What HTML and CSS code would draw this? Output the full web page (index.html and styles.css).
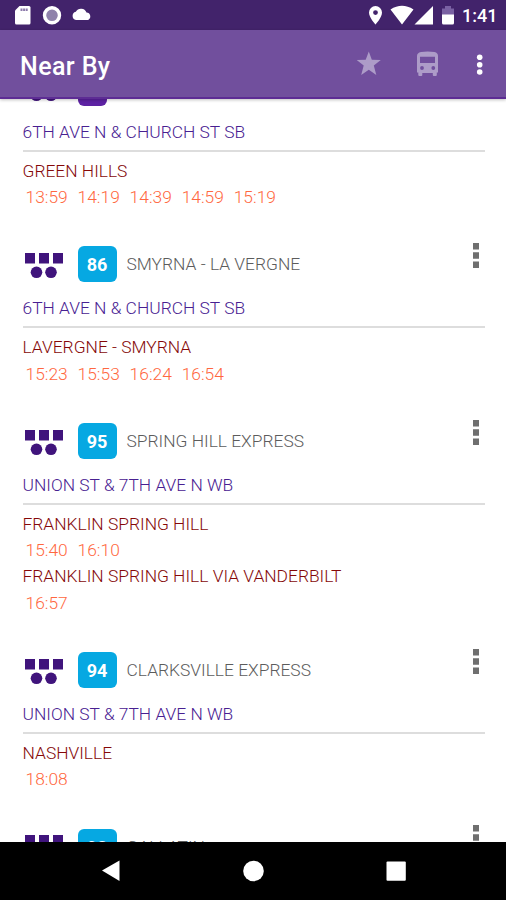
FILE: index.html
```html
<!DOCTYPE html>
<html lang="en">
<head>
<meta charset="utf-8">
<title>Near By</title>
<link rel="stylesheet" href="styles.css">
</head>
<body>
<svg width="0" height="0" class="defs">
  <symbol id="transit" viewBox="0 0 38 26">
    <path d="M0 0h10v10.500H0zM14 0h10v10.500H14zM28 0h10v10.500H28z"/>
    <circle cx="11.500" cy="19.300" r="5.800"/><circle cx="26" cy="19.300" r="5.800"/>
  </symbol>
  <symbol id="more" viewBox="0 0 6 26"><path d="M0 0h6v6.500H0zM0 9.200h6v6.500H0zM0 18.500h6v6.500H0z"/></symbol>
</svg>
<div class="screen">
  <div class="status">
    <svg class="status-left" viewBox="0 0 100 30">
      <path fill="#fff" d="M19.500 6H29q1.500 0 1.500 1.500V23q0 1.500-1.500 1.500H16.500Q15 24.500 15 23V10.500z"/>
      <path stroke="#8d7aab" stroke-width="2.500" stroke-dasharray="2 .6" d="M20.500 9.800H28"/>
      <circle cx="52" cy="15.300" r="7.500" fill="#8f82ab" stroke="#fff" stroke-width="3.400"/>
      <path fill="#fff" d="M76 20a4.200 4.200 0 0 1-.2-8.200A6 6 0 0 1 86.500 12.500a4 4 0 0 1 1.700 7.500z"/>
    </svg>
    <svg class="status-right" viewBox="363 0 98 30">
      <path fill="#fff" fill-rule="evenodd" d="M375.500 6a6.500 6.500 0 0 0-6.500 6.500c0 5 6.500 12 6.500 12s6.500-7 6.500-12A6.500 6.500 0 0 0 375.500 6zm0 4.200a2.400 2.400 0 1 1 0 4.800 2.400 2.400 0 0 1 0-4.800z"/>
      <path fill="#fff" d="M390.500 9.500q11.500-7.500 23 0L402 24.500zM433 6v18.500H414.500z"/>
      <path fill="#7a61a3" d="M442 8.500h3V6h6v2.500h3V15h-12z"/>
      <path fill="#fff" d="M442 14.500h12V23q0 1.500-1.500 1.500h-9Q442 24.500 442 23z"/>
    </svg>
    <span class="clock">1:41</span>
  </div>
  <header class="bar">
    <h1 class="title">Near By</h1>
    <svg class="bar-icons" viewBox="350 44 142 40">
      <path fill="#ad9cc8" d="M368.800 51.500l3 8.300 9 .3-7 5.500 2.500 9.400-7.500-5.200-7.600 5.200 2.500-9.400-7-5.500 9-.3z"/>
      <path fill="#ad9cc8" fill-rule="evenodd" d="M421 52q6.500-1.200 13.500 0 3.500.8 3.500 4v16.500h-1.200V75q0 1-1 1h-2q-1 0-1-1v-2h-10.500v2q0 1-1 1h-2q-1 0-1-1v-2.500H417V56q0-3.200 4-4zm-1 4.800v6.200h15v-6.200zm2 9.300a1.900 1.900 0 1 0 0 3.800 1.900 1.900 0 0 0 0-3.800zm11.300 0a1.900 1.900 0 1 0 0 3.800 1.900 1.900 0 0 0 0-3.800z"/>
      <g fill="#fff"><circle cx="479.700" cy="57.300" r="2.800"/><circle cx="479.700" cy="64.800" r="2.800"/><circle cx="479.700" cy="72" r="2.800"/></g>
    </svg>
  </header>
  <main class="list">
    <section class="card">
      <div class="head"><svg class="agency"><use href="#transit"/></svg><span class="badge violet"></span><svg class="more"><use href="#more"/></svg></div>
      <div class="stop">6TH AVE N &amp; CHURCH ST SB</div>
      <div class="sign">GREEN HILLS</div>
      <div class="times"><span>13:59</span><span>14:19</span><span>14:39</span><span>14:59</span><span>15:19</span></div>
    </section>
    <section class="card">
      <div class="head"><svg class="agency"><use href="#transit"/></svg><span class="badge">86</span><span class="route">SMYRNA - LA VERGNE</span><svg class="more"><use href="#more"/></svg></div>
      <div class="stop">6TH AVE N &amp; CHURCH ST SB</div>
      <div class="sign">LAVERGNE - SMYRNA</div>
      <div class="times"><span>15:23</span><span>15:53</span><span>16:24</span><span>16:54</span></div>
    </section>
    <section class="card">
      <div class="head"><svg class="agency"><use href="#transit"/></svg><span class="badge">95</span><span class="route">SPRING HILL EXPRESS</span><svg class="more"><use href="#more"/></svg></div>
      <div class="stop">UNION ST &amp; 7TH AVE N WB</div>
      <div class="sign">FRANKLIN SPRING HILL</div>
      <div class="times"><span>15:40</span><span>16:10</span></div>
      <div class="sign">FRANKLIN SPRING HILL VIA VANDERBILT</div>
      <div class="times"><span>16:57</span></div>
    </section>
    <section class="card">
      <div class="head"><svg class="agency"><use href="#transit"/></svg><span class="badge">94</span><span class="route">CLARKSVILLE EXPRESS</span><svg class="more"><use href="#more"/></svg></div>
      <div class="stop">UNION ST &amp; 7TH AVE N WB</div>
      <div class="sign">NASHVILLE</div>
      <div class="times"><span>18:08</span></div>
    </section>
    <section class="card">
      <div class="head"><svg class="agency"><use href="#transit"/></svg><span class="badge">92</span><span class="route">GALLATIN</span><svg class="more"><use href="#more"/></svg></div>
    </section>
  </main>
  <nav class="nav">
    <svg class="nav-icons" viewBox="0 842 506 58">
      <g fill="#fff"><path d="M102 870.500L119.500 860.500v20.500z"/><circle cx="253.500" cy="871" r="10.300"/><rect x="386.500" y="861.500" width="19.300" height="19.300" rx="1"/></g>
    </svg>
  </nav>
</div>
</body>
</html>
```
FILE: styles.css
```css
* { box-sizing: border-box; }
body { margin: 0; background: #fff; font-family: Roboto, "Liberation Sans", sans-serif; }
svg { display: block; flex: none; }
.defs { position: absolute; }
.screen { width: 506px; height: 900px; display: flex; flex-direction: column; overflow: hidden; }
.status { height: 30px; flex: none; background: #42236b; display: flex; align-items: center; color: #fff; }
.status-left { width: 100px; height: 30px; }
.status-right { width: 98px; height: 30px; margin-left: 263px; }
.clock { font-size: 18px; font-weight: 500; margin-left: 1px; line-height: 30px; padding-top: 2px; white-space: nowrap; }
.bar { height: 69px; flex: none; background: #714f9d; border-bottom: 2px solid #5d2c94; display: flex; align-items: center; justify-content: space-between; padding: 0 14px 0 20px; z-index: 1; box-shadow: 0 1px 3px rgba(0, 0, 0, .25); }
.title { margin: 0; padding-top: 6px; color: #fff; font-size: 25px; letter-spacing: .4px; font-weight: 500; line-height: 30px; }
.bar-icons { width: 142px; height: 40px; }
.list { height: 743px; flex: none; overflow: hidden; padding: 0 21.500px 0 22.500px; background: #fff; }
.card { margin-bottom: 36.200px; font-size: 17.400px; }
.card:first-child { margin-top: -29.200px; }
.head { display: flex; align-items: center; height: 36px; }
.agency { width: 38px; height: 26px; margin: 3px 15px 0 2px; fill: #40147c; }
.badge { width: 39px; height: 36px; border-radius: 6px; background: #06a8e2; color: #fff; font-weight: 700; font-size: 18px; line-height: 37px; text-align: center; }
.violet { width: 29px; background: #5d22a3; }
.route { margin-left: 10px; color: #5c5c5c; line-height: 36px; font-weight: 300; white-space: nowrap; }
.more { width: 6px; height: 26px; margin-left: auto; margin-right: 6px; margin-top: -17px; fill: #6f6f6f; }
.stop { margin-top: 13px; height: 33px; line-height: 27px; border-bottom: 2.200px solid #ddd; color: #482091; font-weight: 300; margin-bottom: 6px; }
.sign { line-height: 26.200px; color: #850808; font-weight: 300; }
.times { display: flex; gap: 9.800px; padding-left: 3px; line-height: 26.200px; color: #ff6740; font-weight: 300; }
.nav { height: 58px; flex: none; background: #000; }
.nav-icons { width: 506px; height: 58px; }
```
